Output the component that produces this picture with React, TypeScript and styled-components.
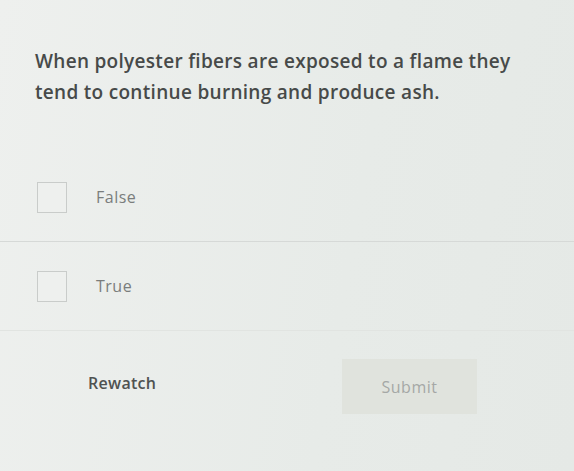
import React from "react";
import styled, { createGlobalStyle } from "styled-components";

const GlobalStyle = createGlobalStyle`
  body {
    margin: 0;
    background: linear-gradient(100deg, #eef0ee 0%, #e7ebe8 60%, #e5e9e6 100%);
    font-family: "Open Sans", "Liberation Sans", sans-serif;
  }
`;

const Page = styled.div`
  width: 574px;
  height: 471px;
  display: flex;
  flex-direction: column;
`;

const Question = styled.p`
  margin: 0;
  padding: 46px 50px 0 35px;
  font-size: 19px;
  font-weight: 600;
  letter-spacing: 0.3px;
  line-height: 31px;
  color: #474a49;
`;

const Options = styled.div`
  margin-top: 45px;
  display: flex;
  flex-direction: column;
`;

const Option = styled.label<{ $last?: boolean }>`
  display: flex;
  align-items: center;
  gap: 29px;
  height: 89px;
  padding-left: 37px;
  border-bottom: 1px solid ${(p) => (p.$last ? "#e1e4e1" : "#d6d9d7")};
  box-sizing: border-box;
`;

const Box = styled.span`
  width: 30px;
  height: 31px;
  border: 1px solid #c9ccca;
  background: #eef0ee;
  box-sizing: border-box;
`;

const OptionText = styled.span`
  font-size: 16px;
  letter-spacing: 0.5px;
  color: #7a7d7c;
`;

const Actions = styled.div`
  display: flex;
  align-items: center;
  padding: 28px 0 0 88px;
`;

const Rewatch = styled.span`
  font-size: 16px;
  font-weight: 600;
  letter-spacing: 0.3px;
  color: #4f5251;
  margin-top: -8px;
`;

const Submit = styled.button`
  margin-left: auto;
  margin-right: 97px;
  width: 135px;
  height: 55px;
  border: none;
  background: #e0e3dd;
  font-family: inherit;
  font-size: 16px;
  letter-spacing: 0.5px;
  color: #a5a8a6;
`;

const App: React.FC = () => {
  return (
    <>
      <GlobalStyle />
      <Page>
        <Question>
          When polyester fibers are exposed to a flame they tend to continue burning and produce ash.
        </Question>
        <Options>
          <Option>
            <Box />
            <OptionText>False</OptionText>
          </Option>
          <Option $last>
            <Box />
            <OptionText>True</OptionText>
          </Option>
        </Options>
        <Actions>
          <Rewatch>Rewatch</Rewatch>
          <Submit>Submit</Submit>
        </Actions>
      </Page>
    </>
  );
};

export default App;
